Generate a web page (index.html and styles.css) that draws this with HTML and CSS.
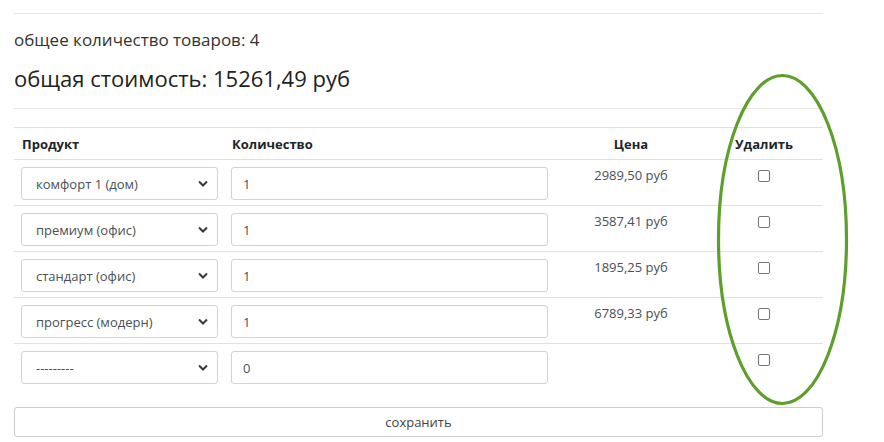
FILE: index.html
```html
<!DOCTYPE html>
<html lang="ru">
<head>
<meta charset="utf-8">
<link rel="stylesheet" href="styles.css">
</head>
<body>
<div class="page">
  <hr class="rule rule-top">
  <p class="count">общее количество товаров: 4</p>
  <h2 class="total">общая стоимость: 15261,49 руб</h2>
  <hr class="rule rule-mid">
  <table class="cart">
    <thead>
      <tr>
        <th class="c-prod">Продукт</th>
        <th class="c-qty">Количество</th>
        <th class="c-price">Цена</th>
        <th class="c-del">Удалить</th>
      </tr>
    </thead>
    <tbody>
      <tr>
        <td><div class="select"><span>комфорт 1 (дом)</span><svg class="chev" viewBox="0 0 10 6"><path d="M1 1l4 4 4-4" /></svg></div></td>
        <td><div class="input">1</div></td>
        <td class="price">2989,50 руб</td>
        <td class="del"><span class="box"></span></td>
      </tr>
      <tr>
        <td><div class="select"><span>премиум (офис)</span><svg class="chev" viewBox="0 0 10 6"><path d="M1 1l4 4 4-4" /></svg></div></td>
        <td><div class="input">1</div></td>
        <td class="price">3587,41 руб</td>
        <td class="del"><span class="box"></span></td>
      </tr>
      <tr>
        <td><div class="select"><span>стандарт (офис)</span><svg class="chev" viewBox="0 0 10 6"><path d="M1 1l4 4 4-4" /></svg></div></td>
        <td><div class="input">1</div></td>
        <td class="price">1895,25 руб</td>
        <td class="del"><span class="box"></span></td>
      </tr>
      <tr>
        <td><div class="select"><span>прогресс (модерн)</span><svg class="chev" viewBox="0 0 10 6"><path d="M1 1l4 4 4-4" /></svg></div></td>
        <td><div class="input">1</div></td>
        <td class="price">6789,33 руб</td>
        <td class="del"><span class="box"></span></td>
      </tr>
      <tr class="last">
        <td><div class="select"><span>---------</span><svg class="chev" viewBox="0 0 10 6"><path d="M1 1l4 4 4-4" /></svg></div></td>
        <td><div class="input">0</div></td>
        <td class="price"></td>
        <td class="del"><span class="box"></span></td>
      </tr>
    </tbody>
  </table>
  <button class="save">сохранить</button>
</div>
<svg class="ring" width="140" height="340" viewBox="0 0 140 340"><ellipse cx="68.5" cy="168.5" rx="64" ry="164" /></svg>
</body>
</html>
```
FILE: styles.css
```css
html, body {
  margin: 0;
  padding: 0;
  background: #fff;
}
body {
  font-family: "Open Sans", "Liberation Sans", sans-serif;
  color: #212529;
  position: relative;
  width: 884px;
  height: 442px;
  overflow: hidden;
}
.page {
  width: 809px;
  margin-left: 14px;
  padding-top: 13px;
}
.rule {
  border: 0;
  border-top: 1px solid #e6e6e6;
  margin: 0;
}
.count {
  margin: 16px 0 0;
  font-size: 17px;
  line-height: 20px;
  color: #333;
}
.total {
  margin: 14px 0 0;
  font-size: 22px;
  line-height: 28px;
  font-weight: 400;
  color: #222;
}
.rule-mid {
  margin-top: 16px;
}
.cart {
  margin-top: 18px;
  width: 809px;
  border-collapse: collapse;
  table-layout: fixed;
  font-size: 13px;
}
.cart th {
  border-top: 1px solid #dee2e6;
  border-bottom: 1px solid #dee2e6;
  height: 31px;
  padding: 0 8px;
  font-weight: 700;
  text-align: left;
  color: #212529;
  vertical-align: middle;
}
.c-prod { width: 194px; }
.c-qty { width: 317px; }
.c-price { width: 132px; }
.cart th.c-price, .cart th.c-del { text-align: center; }
.cart td {
  padding: 7px 7px 5px;
  vertical-align: top;
  border-bottom: 1px solid #dee2e6;
  height: 33px;
}
.cart tr.last td { border-bottom: 0; }
.select, .input {
  box-sizing: border-box;
  height: 33px;
  border: 1px solid #ced4da;
  border-radius: 3px;
  display: flex;
  align-items: center;
  color: #495057;
  font-size: 13px;
}
.select {
  width: 197px;
  padding: 0 9px 0 14px;
  justify-content: space-between;
}
.chev {
  width: 10px;
  height: 7px;
  fill: none;
  stroke: #343a40;
  stroke-width: 2;
}
.input {
  width: 317px;
  padding: 0 11px;
}
.price {
  text-align: center;
  color: #495057;
  font-size: 13px;
  line-height: 20px;
}
.cart td.price { padding-top: 5px; }
.del { text-align: center; }
.box {
  display: inline-block;
  width: 10px;
  height: 10px;
  border: 1px solid #767676;
  border-radius: 2px;
  margin-top: 3px;
}
.save {
  display: block;
  margin-top: 18px;
  width: 809px;
  height: 30px;
  border: 1px solid #ccc;
  border-radius: 3px;
  background: #fff;
  font-family: inherit;
  font-size: 13px;
  color: #444;
}
.ring {
  position: absolute;
  left: 714px;
  top: 71px;
}
.ring ellipse {
  fill: none;
  stroke: #5e9f2b;
  stroke-width: 3.2;
}
```
